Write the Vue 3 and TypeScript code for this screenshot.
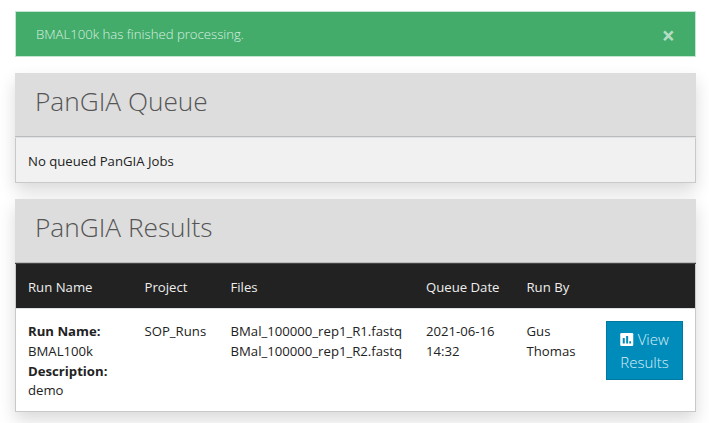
<script setup lang="ts">
import { ref } from 'vue'

interface Run {
  name: string
  description: string
  project: string
  files: string[]
  queueDate: string
  runBy: string
}

const alertVisible = ref(true)
const columns: string[] = ['Run Name', 'Project', 'Files', 'Queue Date', 'Run By', '']
const runs: Run[] = [
  {
    name: 'BMAL100k',
    description: 'demo',
    project: 'SOP_Runs',
    files: ['BMal_100000_rep1_R1.fastq', 'BMal_100000_rep1_R2.fastq'],
    queueDate: '2021-06-16 14:32',
    runBy: 'Gus Thomas',
  },
]
</script>

<template>
  <main class="page">
    <div v-if="alertVisible" class="alert" role="alert">
      <span>BMAL100k has finished processing.</span>
      <button class="close" type="button" aria-label="Close" @click="alertVisible = false">×</button>
    </div>

    <section class="card">
      <header class="card-header"><h3>PanGIA Queue</h3></header>
      <div class="empty">No queued PanGIA Jobs</div>
    </section>

    <section class="card">
      <header class="card-header dark-edge"><h3>PanGIA Results</h3></header>
      <div class="table">
        <div class="row head">
          <div v-for="(column, i) in columns" :key="i" class="cell">{{ column }}</div>
        </div>
        <div v-for="run in runs" :key="run.name" class="row body">
          <div class="cell">
            <b>Run Name:</b><br />{{ run.name }}<br /><b>Description:</b><br />{{ run.description }}
          </div>
          <div class="cell">{{ run.project }}</div>
          <div class="cell"><div v-for="file in run.files" :key="file">{{ file }}</div></div>
          <div class="cell">{{ run.queueDate }}</div>
          <div class="cell">{{ run.runBy }}</div>
          <div class="cell action">
            <button class="view" type="button">
              <svg class="icon" viewBox="0 0 13 13" aria-hidden="true">
                <rect width="13" height="13" rx="1.3" fill="#fff" />
                <path d="M2.5 5h2v5.5h-2zM5.9 3h2v7.5h-2zM9 8.2h1.8v2.3H9z" fill="#008cba" />
              </svg>
              View Results
            </button>
          </div>
        </div>
      </div>
    </section>
  </main>
</template>

<style>
body {
  margin: 0;
  background: #fff;
  overflow: hidden;
}
</style>

<style scoped>
.page {
  box-sizing: border-box;
  width: 709px;
  height: 423px;
  overflow: hidden;
  padding: 11px 13px 0 15px;
  font: 400 13.16px/19.74px 'Open Sans', sans-serif;
  color: #222;
}
.alert {
  box-sizing: border-box;
  display: flex;
  align-items: center;
  justify-content: space-between;
  height: 46px;
  padding: 1px 20px 0;
  margin-bottom: 16px;
  border: 1px solid #c3e6d1;
  background: #43ac6a;
  color: #d9f0e1;
  font-weight: 300;
}
.close {
  padding: 0;
  border: 0;
  background: none;
  color: #b4dec3;
  font: 700 23px/22px 'Open Sans', sans-serif;
}
.card {
  margin-bottom: 16px;
  box-shadow: 0 8px 16px rgba(0, 0, 0, 0.15);
}
.card-header {
  box-sizing: border-box;
  height: 65px;
  padding: 11px 20px;
  background: #ddd;
  border-bottom: 1px solid #dee2e6;
  box-shadow: inset 0 -1px #bbb;
}
.dark-edge {
  border-bottom-color: #454545;
}
h3 {
  margin: 0;
  font-size: 26.24px;
  line-height: 34px;
  font-weight: 300;
  color: #555;
}
.empty {
  box-sizing: border-box;
  height: 45px;
  padding: 14px 12px 0;
  border: 1px solid #c8c9ca;
  border-top: 0;
  background: #f1f1f1;
}
.table {
  border: 1px solid #c8c9ca;
  border-top: 0;
  background: #fff;
}
.row {
  display: grid;
  grid-template-columns: 116.5px 86px 195.5px 100.5px 79.5px 101px;
}
.cell {
  padding: 13px 12px 0;
}
.head {
  box-sizing: border-box;
  height: 45px;
  background: #222;
  color: #eee;
  border-bottom: 1px solid #dee2e6;
}
.head .cell {
  padding-top: 14px;
}
.body {
  box-sizing: border-box;
  height: 102px;
}
.body .cell {
  padding-top: 13.2px;
}
.body .action {
  padding-top: 12px;
}
.view {
  box-sizing: border-box;
  display: block;
  width: 77px;
  height: 59px;
  padding: 6px 8px;
  border: 1px solid #0079a1;
  background: #008cba;
  color: #d9eff7;
  font: 300 15px/22.5px 'Open Sans', sans-serif;
  text-align: center;
}
.icon {
  width: 13.5px;
  height: 13px;
  vertical-align: -1px;
}
</style>
